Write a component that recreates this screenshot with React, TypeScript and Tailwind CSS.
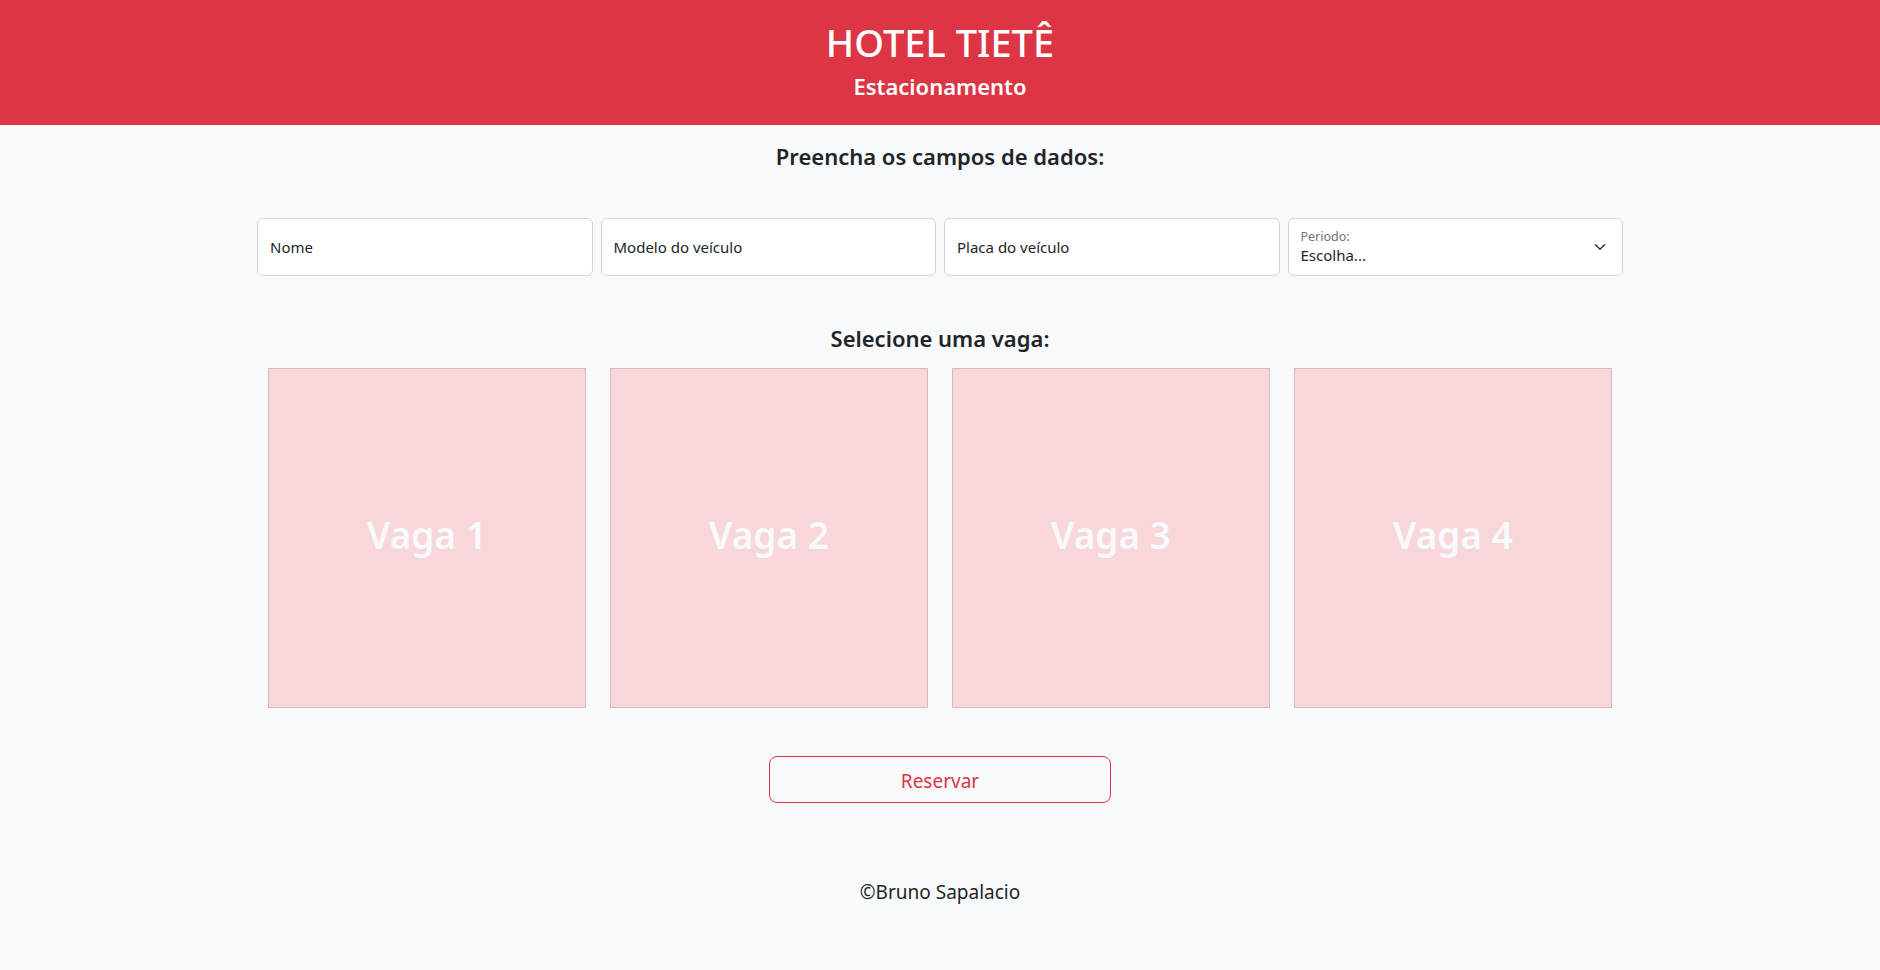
import React from "react";

function Vaga({ n }: { n: number }) {
  return (
    <div className="h-[340px] border border-[#dcb8bd] bg-[#f8d7da] flex items-center justify-center">
      <span className="text-[37px] font-semibold text-[#f8f9fa] leading-none mb-[8px]">Vaga {n}</span>
    </div>
  );
}

export default function App() {
  return (
    <div className="min-h-screen bg-[#f8f9fa] text-[#212529] font-['Noto_Sans',sans-serif]">
      <header className="h-[125px] bg-[#dc3545] text-white flex flex-col items-center pt-[18px]">
        <h1 className="text-[38px] font-medium leading-[48px]">HOTEL TIETÊ</h1>
        <h2 className="text-[22px] font-semibold leading-[30px] mt-[5px]">Estacionamento</h2>
      </header>
      <main className="w-[1366px] mx-auto">
        <h3 className="text-center text-[22px] font-semibold leading-[29px] pt-[17px]">
          Preencha os campos de dados:
        </h3>
        <div className="grid grid-cols-4 gap-2 mt-[47px]">
          {["Nome", "Modelo do veículo", "Placa do veículo"].map((p) => (
            <div
              key={p}
              className="h-[58px] bg-white border border-[#ced4da] rounded-md flex items-center px-3 text-[15px] text-[#212529]"
            >
              {p}
            </div>
          ))}
          <div className="h-[58px] bg-white border border-[#ced4da] rounded-md flex items-center justify-between pl-3 pr-4">
            <div className="flex flex-col">
              <span className="text-[12.5px] leading-[15px] text-[#6c757d]">Periodo:</span>
              <span className="text-[15px] leading-[22px] text-[#212529]">Escolha...</span>
            </div>
            <svg width="12" height="8" viewBox="0 0 16 10" fill="none" stroke="#343a40" strokeWidth="2" strokeLinecap="round" strokeLinejoin="round">
              <path d="M2 2l6 6 6-6" />
            </svg>
          </div>
        </div>
        <h3 className="text-center text-[22px] font-semibold leading-[29px] mt-[48px]">
          Selecione uma vaga:
        </h3>
        <div className="w-[1344px] mx-auto grid grid-cols-4 gap-6 mt-[15px]">
          {[1, 2, 3, 4].map((n) => (
            <Vaga key={n} n={n} />
          ))}
        </div>
        <div className="flex justify-center mt-[48px]">
          <button className="w-[342px] h-[47px] border border-[#dc3545] rounded-lg text-[#dc3545] text-[19px] bg-transparent pt-[3px]">
            Reservar
          </button>
        </div>
        <p className="text-center text-[19px] leading-[30px] mt-[74px]">©Bruno Sapalacio</p>
      </main>
    </div>
  );
}
